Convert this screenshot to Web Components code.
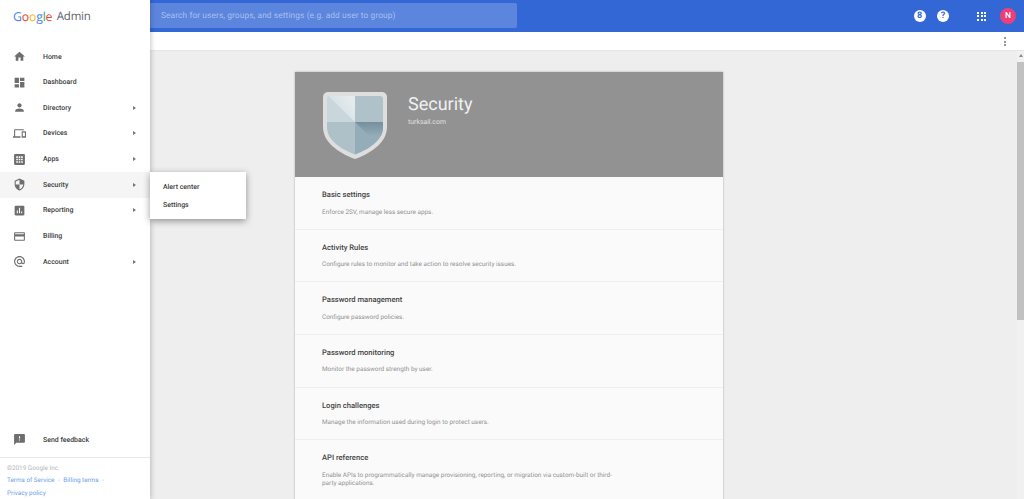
<!DOCTYPE html>
<html>
<head>
<meta charset="utf-8">
<title>Google Admin - Security</title>
<style>
    html, body { margin: 0; height: 100%; overflow: hidden; }
    body { font-family: Roboto, "Liberation Sans", sans-serif; background: #eeeeee; }
</style>
</head>
<body>
<admin-app></admin-app>
<script>
const icons = {
    home: `<path d="M10 20v-6h4v6h5v-8h3L12 3 2 12h3v8z"/>`,
    dashboard: `<path d="M3 13h8V3H3zm0 8h8v-6H3zm10 0h8V11h-8zm0-18v6h8V3z"/>`,
    directory: `<path d="M12 12c2.2 0 4-1.8 4-4s-1.8-4-4-4-4 1.8-4 4 1.8 4 4 4zm0 2c-2.7 0-8 1.3-8 4v2h16v-2c0-2.7-5.3-4-8-4z"/>`,
    devices: `<path d="M4 6h16V4H4c-1.1 0-2 .9-2 2v11H0v3h14v-3H4zm19 2h-6c-.6 0-1 .4-1 1v10c0 .6.4 1 1 1h6c.6 0 1-.4 1-1V9c0-.6-.4-1-1-1zm-1 9h-4v-7h4z"/>`,
    apps: `<path fill-rule="evenodd" d="M4 2h16c1.1 0 2 .9 2 2v16c0 1.1-.9 2-2 2H4c-1.1 0-2-.9-2-2V4c0-1.1.9-2 2-2zm2 4v3h3V6zm4.500 0v3h3V6zM15 6v3h3V6zM6 10.500v3h3v-3zm4.500 0v3h3v-3zm4.500 0v3h3v-3zM6 15v3h3v-3zm4.500 0v3h3v-3zm4.500 0v3h3v-3z"/>`,
    security: `<path fill-rule="evenodd" d="M12 1 3 5v6c0 5.600 3.800 10.700 9 12 5.200-1.300 9-6.400 9-12V5zm0 2.200V12h7c-.5 4.100-3.300 7.800-7 8.900V12H5V6.300z"/>`,
    reporting: `<path fill-rule="evenodd" d="M5 3h14c1.100 0 2 .9 2 2v14c0 1.100-.9 2-2 2H5c-1.100 0-2-.9-2-2V5c0-1.100.9-2 2-2zm2 9v5h2v-5zm4-5v10h2V7zm4 7v3h2v-3z"/>`,
    billing: `<path d="M20 4H4c-1.100 0-2 .9-2 2v12c0 1.100.9 2 2 2h16c1.100 0 2-.9 2-2V6c0-1.100-.9-2-2-2zm0 14H4v-6h16zm0-10H4V6h16z"/>`,
    account: `<path d="M12 2C6.500 2 2 6.500 2 12s4.500 10 10 10h5v-2h-5c-4.300 0-8-3.700-8-8s3.700-8 8-8 8 3.700 8 8v1.400c0 .8-.7 1.600-1.500 1.600s-1.500-.8-1.500-1.600V12c0-2.800-2.200-5-5-5s-5 2.200-5 5 2.200 5 5 5c1.400 0 2.700-.6 3.600-1.500.6.900 1.800 1.500 2.900 1.500 2 0 3.500-1.600 3.500-3.600V12c0-5.500-4.500-10-10-10zm0 13c-1.700 0-3-1.300-3-3s1.300-3 3-3 3 1.300 3 3-1.300 3-3 3z"/>`,
    feedback: `<path fill-rule="evenodd" d="M20 2H4c-1.100 0-2 .9-2 2v18l4-4h14c1.100 0 2-.9 2-2V4c0-1.100-.9-2-2-2zm-7 12h-2v-2h2zm0-4h-2V6h2z"/>`
};

class NavItem extends HTMLElement {
    constructor() {
        super();
        this.attachShadow({mode: "open"});
        const icon = icons[this.getAttribute("icon")] || "";
        const arrow = this.hasAttribute("arrow") ? `<span id="arrow"></span>` : "";
        this.shadowRoot.innerHTML = `
            <style>
                :host {
                    display: flex;
                    align-items: center;
                    height: 25.67px;
                    padding-left: 13px;
                    font-size: 6.950px;
                    font-weight: 500;
                    color: #3c3c3c;
                }
                :host([active]) { background: #f5f5f5; }
                svg { width: 13px; height: 13px; fill: #6e6e6e; flex: none; }
                #label { margin-left: 17px; flex: 1; }
                #arrow {
                    margin-right: 14px;
                    border-left: 3px solid #757575;
                    border-top: 2.6px solid transparent;
                    border-bottom: 2.6px solid transparent;
                }
            </style>
            <svg viewBox="0 0 24 24">${icon}</svg>
            <span id="label"><slot></slot></span>
            ${arrow}`;
    }
}
customElements.define("nav-item", NavItem);

class SideDrawer extends HTMLElement {
    constructor() {
        super();
        this.attachShadow({mode: "open"});
        this.shadowRoot.innerHTML = `
            <style>
                :host {
                    position: absolute;
                    left: 0;
                    top: 0;
                    bottom: 0;
                    width: 150px;
                    display: flex;
                    flex-direction: column;
                    background: #ffffff;
                    box-shadow: 1px 0 5px rgba(0, 0, 0, 0.22);
                    z-index: 3;
                }
                #logo {
                    display: flex;
                    align-items: center;
                    height: 33px;
                    padding-left: 13px;
                    color: #5f6368;
                }
                #logo b { font-weight: 400; }
                #logo .word { margin-right: 4.500px; font-family: "Open Sans", sans-serif; font-size: 12.300px; letter-spacing: -0.2px; }
                #logo .name { font-family: "Open Sans", sans-serif; font-size: 11.500px; letter-spacing: -0.2px; }
                #items { padding-top: 10.700px; flex: 1; }
                #feedback { padding-bottom: 4.500px; border-bottom: 1px solid #e8e8e8; }
                #footer {
                    height: 37px;
                    padding: 4px 0 0 7px;
                    font-size: 6.350px;
                    color: #b5b5b5;
                    line-height: 12.300px;
                }
                #footer a { color: #6d9eeb; }
                #footer i { font-style: normal; color: #aaaaaa; margin: 0 2px; }
            </style>
            <div id="logo">
                <span class="word"><b style="color:#4285f4">G</b><b style="color:#ea4335">o</b><b style="color:#fbbc05">o</b><b style="color:#4285f4">g</b><b style="color:#34a853">l</b><b style="color:#ea4335">e</b></span>
                <span class="name">Admin</span>
            </div>
            <div id="items"><slot></slot></div>
            <div id="feedback"><slot name="bottom"></slot></div>
            <div id="footer">
                <div>©2019 Google Inc.</div>
                <div><a>Terms of Service</a> <i>-</i> <a>Billing terms</a> <i>-</i></div>
                <div><a>Privacy policy</a></div>
            </div>`;
    }
}
customElements.define("side-drawer", SideDrawer);

class FlyoutMenu extends HTMLElement {
    constructor() {
        super();
        this.attachShadow({mode: "open"});
        this.shadowRoot.innerHTML = `
            <style>
                :host {
                    position: absolute;
                    left: 150px;
                    top: 172px;
                    width: 96px;
                    height: 47px;
                    padding-top: 5.500px;
                    box-sizing: border-box;
                    background: #ffffff;
                    box-shadow: 0 2px 7px rgba(0, 0, 0, 0.4);
                    font-size: 6.950px;
                    font-weight: 500;
                    color: #3c3c3c;
                    z-index: 4;
                }
                div { height: 18.300px; line-height: 18.300px; padding-left: 13px; }
            </style>
            <div>Alert center</div>
            <div>Settings</div>`;
    }
}
customElements.define("flyout-menu", FlyoutMenu);

class TopBar extends HTMLElement {
    constructor() {
        super();
        this.attachShadow({mode: "open"});
        this.shadowRoot.innerHTML = `
            <style>
                :host {
                    display: flex;
                    align-items: center;
                    height: 32px;
                    padding-left: 150px;
                    background: #3367d6;
                    box-sizing: border-box;
                }
                #search {
                    width: 367px;
                    height: 25px;
                    margin-top: -1px;
                    background: #5c85dd;
                    border-radius: 0 2px 2px 0;
                    color: #a9c0ef;
                    font-size: 8.350px;
                    line-height: 27px;
                    padding-left: 11px;
                    box-sizing: border-box;
                    letter-spacing: 0.1px;
                }
                #right {
                    margin-left: auto;
                    display: flex;
                    align-items: center;
                    padding-right: 8px;
                }
                .round {
                    width: 12px;
                    height: 12px;
                    border-radius: 50%;
                    background: #ffffff;
                    color: #3367d6;
                    font-size: 9px;
                    font-weight: 700;
                    line-height: 12px;
                    text-align: center;
                }
                #help { margin-left: 11.500px; }
                #grid { display: grid; grid-template-columns: repeat(3, 2px); gap: 1.500px; margin-left: 28px; }
                #grid span { width: 2px; height: 2px; background: #ffffff; }
                #avatar {
                    width: 16px;
                    height: 16px;
                    margin-left: 14px;
                    border-radius: 50%;
                    background: #ec407a;
                    color: #ffffff;
                    font-size: 8.500px;
                    font-weight: 500;
                    line-height: 16px;
                    text-align: center;
                }
            </style>
            <div id="search">Search for users, groups, and settings (e.g. add user to group)</div>
            <div id="right">
                <div class="round">8</div>
                <div class="round" id="help">?</div>
                <div id="grid">${"<span></span>".repeat(9)}</div>
                <div id="avatar">N</div>
            </div>`;
    }
}
customElements.define("top-bar", TopBar);

class SubBar extends HTMLElement {
    constructor() {
        super();
        this.attachShadow({mode: "open"});
        this.shadowRoot.innerHTML = `
            <style>
                :host {
                    display: flex;
                    align-items: center;
                    justify-content: flex-end;
                    height: 18px;
                    padding-right: 18px;
                    background: #ffffff;
                    border-bottom: 1px solid #e6e6e6;
                    box-sizing: border-box;
                }
                #more { display: grid; gap: 1.200px; }
                #more span { width: 2px; height: 2px; border-radius: 50%; background: #757575; }
            </style>
            <div id="more"><span></span><span></span><span></span></div>`;
    }
}
customElements.define("sub-bar", SubBar);

class SettingRow extends HTMLElement {
    constructor() {
        super();
        this.attachShadow({mode: "open"});
        this.shadowRoot.innerHTML = `
            <style>
                :host {
                    display: block;
                    height: 52.670px;
                    box-sizing: border-box;
                    padding: 12px 106px 0 27px;
                    border-bottom: 1px solid #efefef;
                }
                :host(:last-of-type) { height: 70px; }
                #title { font-size: 7.600px; font-weight: 500; color: #444444; line-height: 11px; }
                #desc { margin-top: 7.500px; font-size: 6.400px; color: #929292; line-height: 8px; }
            </style>
            <div id="title"></div>
            <div id="desc"><slot></slot></div>`;
        this.shadowRoot.querySelector("#title").textContent = this.getAttribute("title");
    }
}
customElements.define("setting-row", SettingRow);

class SecurityCard extends HTMLElement {
    constructor() {
        super();
        this.attachShadow({mode: "open"});
        this.shadowRoot.innerHTML = `
            <style>
                :host {
                    display: block;
                    width: 428px;
                    background: #fafafa;
                    box-shadow: 0 0 2px rgba(0, 0, 0, 0.3);
                }
                #head {
                    display: flex;
                    height: 105px;
                    padding: 20px 0 0 28px;
                    box-sizing: border-box;
                    background: #929292;
                }
                svg { width: 64px; height: 67px; flex: none; }
                #text { margin-left: 21px; padding-top: 3px; color: #f0f0f0; }
                h1 { margin: 0; font-size: 18px; font-weight: 400; line-height: 20px; }
                #domain { margin-top: 3px; font-size: 6.900px; color: #e0e0e0; line-height: 8px; }
            </style>
            <div id="head">
                <svg viewBox="0 0 64 67">
                    <defs>
                        <linearGradient id="light" x1="0.2" y1="0.6" x2="0.9" y2="0.1">
                            <stop offset="0" stop-color="#d5dfe3"/>
                            <stop offset="1" stop-color="#e6ecee"/>
                        </linearGradient>
                        <linearGradient id="wedge" x1="0" y1="0" x2="0" y2="1">
                            <stop offset="0" stop-color="#74909c"/>
                            <stop offset="1" stop-color="#94adb8"/>
                        </linearGradient>
                    </defs>
                    <path d="M5 0h54c2.800 0 5 2.200 5 5v30c0 14-13 25-32 32C13 60 0 49 0 35V5c0-2.800 2.200-5 5-5z" fill="#dedede"/>
                    <path d="M7 4h25v26H4V7c0-1.700 1.300-3 3-3z" fill="#c9d6dc"/>
                    <path d="M6 4.500 32 30V4H7c-.4 0-.7.200-1 .500z" fill="url(#light)"/>
                    <path d="M32 4h25c1.700 0 3 1.300 3 3v23H32z" fill="#afc1c9"/>
                    <path d="M4 30h28v32.500C15 56 4 47 4 35z" fill="#aec0c8"/>
                    <path d="M32 30h28v5c0 12-11 21-28 27.500z" fill="#94adb8"/>
                    <path d="M32 30h28v5c0 3-.7 6-2 9H46z" fill="url(#wedge)"/>
                </svg>
                <div id="text">
                    <h1>Security</h1>
                    <div id="domain">turksail.com</div>
                </div>
            </div>
            <slot></slot>`;
    }
}
customElements.define("security-card", SecurityCard);

class AdminApp extends HTMLElement {
    constructor() {
        super();
        this.attachShadow({mode: "open"});
        this.shadowRoot.innerHTML = `
            <style>
                :host {
                    display: flex;
                    flex-direction: column;
                    position: relative;
                    height: 499px;
                    overflow: hidden;
                    background: #eeeeee;
                    font-family: Roboto, "Liberation Sans", sans-serif;
                    text-rendering: geometricPrecision;
                }
                #gap { height: 1px; background: #ffffff; }
                #body { flex: 1; min-height: 0; display: flex; }
                #scroller { flex: 1; min-width: 0; padding: 21px 0 0 295px; box-sizing: border-box; overflow: hidden; }
                #track { width: 7px; background: #f1f1f1; display: flex; flex-direction: column; align-items: center; }
                #up {
                    margin-top: 3px;
                    border-bottom: 3px solid #8a8a8a;
                    border-left: 2.500px solid transparent;
                    border-right: 2.500px solid transparent;
                }
                #thumb { width: 7px; height: 258px; margin-top: 5px; background: #c1c1c1; }
            </style>
            <top-bar></top-bar>
            <div id="gap"></div>
            <sub-bar></sub-bar>
            <div id="body">
                <div id="scroller">
                    <security-card>
                        <setting-row title="Basic settings">Enforce 2SV, manage less secure apps.</setting-row>
                        <setting-row title="Activity Rules">Configure rules to monitor and take action to resolve security issues.</setting-row>
                        <setting-row title="Password management">Configure password policies.</setting-row>
                        <setting-row title="Password monitoring">Monitor the password strength by user.</setting-row>
                        <setting-row title="Login challenges">Manage the information used during login to protect users.</setting-row>
                        <setting-row title="API reference">Enable APIs to programmatically manage provisioning, reporting, or migration via custom-built or third-party applications.</setting-row>
                    </security-card>
                </div>
                <div id="track"><div id="up"></div><div id="thumb"></div></div>
            </div>
            <side-drawer>
                <nav-item icon="home">Home</nav-item>
                <nav-item icon="dashboard">Dashboard</nav-item>
                <nav-item icon="directory" arrow>Directory</nav-item>
                <nav-item icon="devices" arrow>Devices</nav-item>
                <nav-item icon="apps" arrow>Apps</nav-item>
                <nav-item icon="security" arrow active>Security</nav-item>
                <nav-item icon="reporting" arrow>Reporting</nav-item>
                <nav-item icon="billing">Billing</nav-item>
                <nav-item icon="account" arrow>Account</nav-item>
                <nav-item icon="feedback" slot="bottom">Send feedback</nav-item>
            </side-drawer>
            <flyout-menu></flyout-menu>`;
    }
}
customElements.define("admin-app", AdminApp);
</script>
</body>
</html>
